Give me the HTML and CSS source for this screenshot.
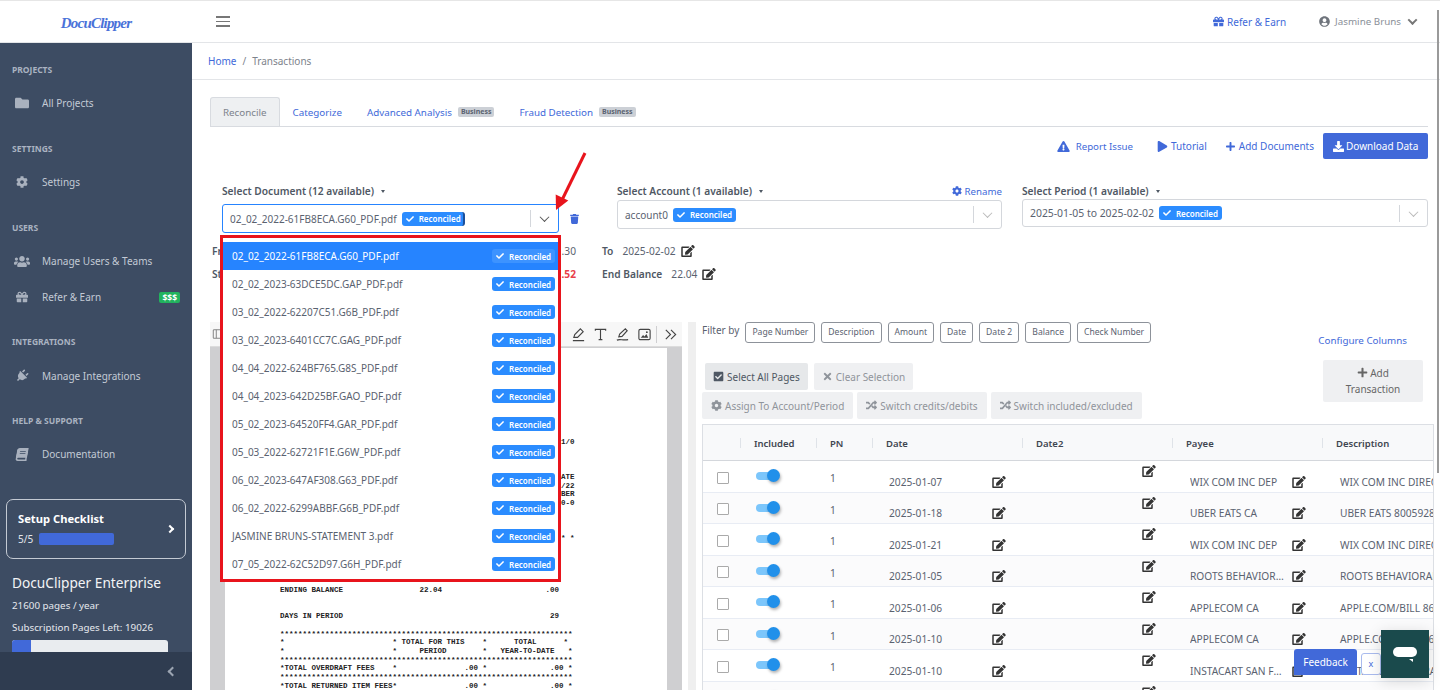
FILE: index.html
```html
<!DOCTYPE html>
<html lang="en">
<head>
    <meta charset="UTF-8">
    <meta name="viewport" content="width=device-width, initial-scale=1.0">
    <title>DocuClipper - Transactions</title>
    <link rel="stylesheet" href="styles.css">
</head>
<body>
    <svg class="sprite" xmlns="http://www.w3.org/2000/svg">
        <symbol id="i-folder" viewBox="0 0 512 512"><path d="M464 128H272l-64-64H48C21.49 64 0 85.49 0 112v288c0 26.51 21.49 48 48 48h416c26.51 0 48-21.49 48-48V176c0-26.51-21.49-48-48-48z"/></symbol>
        <symbol id="i-cog" viewBox="0 0 512 512"><path d="M487.4 315.7l-42.6-24.6c4.3-23.2 4.3-47 0-70.2l42.6-24.6c4.9-2.8 7.1-8.6 5.5-14-11.1-35.6-30-67.8-54.7-94.6-3.8-4.1-10-5.1-14.8-2.3L380.8 110c-17.9-15.4-38.5-27.3-60.8-35.1V25.8c0-5.6-3.9-10.5-9.4-11.7-36.7-8.2-74.3-7.8-109.2 0-5.5 1.2-9.4 6.1-9.4 11.7V75c-22.2 7.9-42.8 19.8-60.8 35.1L88.7 85.5c-4.9-2.8-11-1.9-14.8 2.3-24.7 26.7-43.6 58.9-54.7 94.6-1.7 5.4.6 11.2 5.5 14L67.3 221c-4.3 23.2-4.3 47 0 70.2l-42.6 24.6c-4.9 2.8-7.1 8.6-5.5 14 11.1 35.6 30 67.8 54.7 94.6 3.8 4.1 10 5.1 14.8 2.3l42.6-24.6c17.9 15.4 38.5 27.3 60.8 35.1v49.2c0 5.6 3.9 10.5 9.4 11.7 36.7 8.2 74.3 7.8 109.2 0 5.5-1.2 9.4-6.1 9.4-11.7v-49.2c22.2-7.9 42.8-19.8 60.8-35.1l42.6 24.6c4.9 2.8 11 1.9 14.8-2.3 24.7-26.7 43.6-58.9 54.7-94.6 1.5-5.5-.7-11.3-5.6-14.1zM256 336c-44.1 0-80-35.9-80-80s35.9-80 80-80 80 35.9 80 80-35.9 80-80 80z"/></symbol>
        <symbol id="i-users" viewBox="0 0 640 512"><path d="M96 224c35.3 0 64-28.7 64-64s-28.7-64-64-64-64 28.7-64 64 28.7 64 64 64zm448 0c35.3 0 64-28.7 64-64s-28.7-64-64-64-64 28.7-64 64 28.7 64 64 64zm32 32h-64c-17.6 0-33.5 7.1-45.1 18.6 40.3 22.1 68.9 62 75.1 109.4h66c17.7 0 32-14.3 32-32v-32c0-35.3-28.7-64-64-64zm-256 0c61.9 0 112-50.1 112-112S381.9 32 320 32 208 82.1 208 144s50.1 112 112 112zm76.800 32h-8.300c-20.800 10-43.900 16-68.500 16s-47.600-6-68.500-16h-8.300C179.600 288 128 339.600 128 403.200V432c0 26.500 21.500 48 48 48h288c26.500 0 48-21.500 48-48v-28.800c0-63.600-51.600-115.200-115.200-115.200zm-223.700-13.400C161.500 263.100 145.600 256 128 256H64c-35.300 0-64 28.700-64 64v32c0 17.700 14.300 32 32 32h65.900c6.300-47.400 34.900-87.300 75.200-109.400z"/></symbol>
        <symbol id="i-gift" viewBox="0 0 512 512"><path d="M32 448c0 18 14 32 32 32h160V320H32zM288 480h160c18 0 32-14 32-32V320H288zM480 160h-42c6-12 10-26 10-40 0-48-40-88-88-88-42 0-68 22-104 70-36-48-62-70-104-70-48 0-88 40-88 88 0 14 3 28 10 40H32c-18 0-32 14-32 32v80c0 9 7 16 16 16h480c9 0 16-7 16-16v-80c0-18-14-32-32-32zM152 160c-22 0-40-18-40-40s18-40 40-40c20 0 35 3 81 80zm208 0h-81c46-77 61-80 81-80 22 0 40 18 40 40s-18 40-40 40z"/></symbol>
        <symbol id="i-plug" viewBox="-128 -64 640 640"><path transform="rotate(45 192 256)" d="M320 32a32 32 0 0 0-64 0v96h64zm48 128H16a16 16 0 0 0-16 16v32a16 16 0 0 0 16 16h16v32a160.070 160.070 0 0 0 128 156.800V512h64v-99.200A160.070 160.070 0 0 0 352 256v-32h16a16 16 0 0 0 16-16v-32a16 16 0 0 0-16-16zM128 32a32 32 0 0 0-64 0v96h64z"/></symbol>
        <symbol id="i-book" viewBox="0 0 448 512"><path d="M448 360V24c0-13-11-24-24-24H96C43 0 0 43 0 96v320c0 53 43 96 96 96h328c13 0 24-11 24-24v-16c0-8-4-14-9-19-4-15-4-58 0-72 5-5 9-11 9-21zM128 134c0-3 3-6 6-6h212c3 0 6 3 6 6v20c0 3-3 6-6 6H134c-3 0-6-3-6-6zm0 64c0-3 3-6 6-6h212c3 0 6 3 6 6v20c0 3-3 6-6 6H134c-3 0-6-3-6-6zm253 250H96c-18 0-32-14-32-32s14-32 32-32h285c-2 17-2 47 0 64z"/></symbol>
        <symbol id="i-edit" viewBox="0 0 576 512"><path d="M402.6 83.2l90.2 90.2c3.8 3.8 3.8 10 0 13.8L274.4 405.6l-92.8 10.3c-12.4 1.4-22.9-9.1-21.5-21.5l10.3-92.8L388.8 83.2c3.8-3.8 10-3.8 13.8 0zm162-22.9l-48.8-48.8c-15.2-15.2-39.9-15.2-55.2 0l-35.4 35.4c-3.8 3.8-3.8 10 0 13.8l90.2 90.2c3.8 3.8 10 3.8 13.8 0l35.4-35.4c15.2-15.3 15.2-40 0-55.2zM384 346.2V448H64V128h229.8c3.2 0 6.2-1.3 8.5-3.5l40-40c7.6-7.6 2.2-20.5-8.5-20.5H48C21.5 64 0 85.5 0 112v352c0 26.5 21.5 48 48 48h352c26.5 0 48-21.5 48-48V306.2c0-10.7-12.9-16-20.5-8.5l-40 40c-2.2 2.3-3.5 5.3-3.5 8.5z"/></symbol>
        <symbol id="i-warn" viewBox="0 0 576 512"><path fill-rule="evenodd" d="M569.5 440L329.6 24c-18.4-32-64.7-32-83.2 0L6.5 440c-18.4 31.9 4.6 72 41.6 72h479.8c36.9 0 60-40 41.6-72zM288 354c-25.4 0-46 20.6-46 46s20.6 46 46 46 46-20.6 46-46-20.6-46-46-46zm-43.7-165.4l7.4 136c.3 6.4 5.6 11.4 12 11.4h48.5c6.4 0 11.6-5 12-11.4l7.4-136c.4-6.9-5.1-12.6-12-12.6h-63.4c-6.9 0-12.4 5.8-12 12.6z"/></symbol>
        <symbol id="i-play" viewBox="0 0 448 512"><path d="M424 213L72 5C43-12 0 5 0 47v417c0 38 41 61 72 42l352-208c31-19 31-66 0-85z"/></symbol>
        <symbol id="i-plus" viewBox="0 0 448 512"><path d="M416 208H272V64c0-18-14-32-32-32h-32c-18 0-32 14-32 32v144H32c-18 0-32 14-32 32v32c0 18 14 32 32 32h144v144c0 18 14 32 32 32h32c18 0 32-14 32-32V304h144c18 0 32-14 32-32v-32c0-18-14-32-32-32z"/></symbol>
        <symbol id="i-download" viewBox="0 0 512 512"><path d="M216 0h80c13 0 24 11 24 24v168h88c18 0 27 21 14 34L270 378c-8 8-20 8-28 0L90 226c-13-13-4-34 14-34h88V24c0-13 11-24 24-24zM512 376v112c0 13-11 24-24 24H24c-13 0-24-11-24-24V376c0-13 11-24 24-24h147l49 49c20 20 52 20 72 0l49-49h147c13 0 24 11 24 24z"/></symbol>
        <symbol id="i-check" viewBox="0 0 512 512"><path d="M174 439L7 273c-10-10-10-26 0-36l36-36c10-10 26-10 36 0l113 113L433 73c10-10 26-10 36 0l36 36c10 10 10 26 0 36L210 439c-10 10-26 10-36 0z"/></symbol>
        <symbol id="i-checksq" viewBox="0 0 448 512"><path d="M400 480H48c-26.5 0-48-21.5-48-48V80c0-26.5 21.5-48 48-48h352c26.5 0 48 21.5 48 48v352c0 26.5-21.5 48-48 48zM195.3 382l184-184c6-6 6-16 0-22l-22.6-22.6c-6-6-16-6-22 0L184 303.700l-70-70c-6-6-16-6-22 0l-22.600 22.600c-6 6-6 16 0 22l103.600 103.700c6 6 16 6 22.300 0z"/></symbol>
        <symbol id="i-times" viewBox="0 0 352 512"><path d="M242.7 256l100-100c12.300-12.300 12.300-32.200 0-44.500l-22.200-22.200c-12.300-12.300-32.200-12.300-44.500 0L176 189.300 76 89.300c-12.300-12.300-32.200-12.300-44.500 0L9.300 111.500c-12.300 12.300-12.300 32.200 0 44.500l100 100-100 100c-12.300 12.300-12.300 32.200 0 44.500l22.200 22.200c12.300 12.300 32.200 12.300 44.500 0l100-100 100 100c12.300 12.300 32.200 12.300 44.500 0l22.200-22.200c12.300-12.300 12.300-32.200 0-44.500z"/></symbol>
        <symbol id="i-random" viewBox="0 0 512 512"><path d="M504 362l-80 80c-15 15-41 4-41-17v-41h-59c-3 0-7-2-9-4l-71-76 53-57 57 61h29v-42c0-21 26-32 41-17l80 80c9 9 9 24 0 33zM9 160h84l58 62 53-57-71-76c-2-2-6-4-9-4H9c-5 0-9 4-9 9v57c0 5 4 9 9 9zm374 0v41c0 21 26 32 41 17l80-80c9-9 9-24 0-33l-80-80c-15-15-41-4-41 17v42h-59c-3 0-7 2-9 4L93 352H9c-5 0-9 4-9 9v57c0 5 4 9 9 9h120c3 0 7-2 9-4l211-263z"/></symbol>
        <symbol id="i-trash" viewBox="0 0 448 512"><path d="M432 32H312l-9-19c-4-8-12-13-21-13H166c-9 0-17 5-21 13l-9 19H16C7 32 0 39 0 48v32c0 9 7 16 16 16h416c9 0 16-7 16-16V48c0-9-7-16-16-16zM53 467c2 25 23 45 48 45h246c25 0 46-20 48-45l21-339H32z"/></symbol>
        <symbol id="i-user" viewBox="0 0 496 512"><path fill-rule="evenodd" d="M248 8C111 8 0 119 0 256s111 248 248 248 248-111 248-248S385 8 248 8zm0 96c49 0 88 39 88 88s-39 88-88 88-88-39-88-88 39-88 88-88zm0 344c-59 0-111-27-146-69 19-36 56-61 98-61 2 0 5 0 7 1 13 4 26 6 41 6s28-2 41-6c2-1 5-1 7-1 42 0 79 25 98 61-35 42-87 69-146 69z"/></symbol>
    </svg>

    <header class="topbar">
        <div class="logo">DocuClipper</div>
        <div class="burger"><span></span><span></span><span></span></div>
        <div class="top-right">
            <a class="top-link"><svg class="ic"><use href="#i-gift"/></svg>Refer &amp; Earn</a>
            <span class="top-user"><svg class="ic ic-user"><use href="#i-user"/></svg>Jasmine Bruns<i class="chev chev-user"></i></span>
        </div>
    </header>

    <div class="layout">
        <aside class="sidebar">
            <div class="side-section">
                <div class="side-label">Projects</div>
                <div class="side-item"><svg class="side-ic"><use href="#i-folder"/></svg>All Projects</div>
            </div>
            <div class="side-section">
                <div class="side-label">Settings</div>
                <div class="side-item"><svg class="side-ic side-ic-small"><use href="#i-cog"/></svg>Settings</div>
            </div>
            <div class="side-section">
                <div class="side-label">Users</div>
                <div class="side-item"><svg class="side-ic side-ic-wide"><use href="#i-users"/></svg>Manage Users &amp; Teams</div>
                <div class="side-item"><svg class="side-ic side-ic-small"><use href="#i-gift"/></svg>Refer &amp; Earn<span class="money">$$$</span></div>
            </div>
            <div class="side-section">
                <div class="side-label">Integrations</div>
                <div class="side-item"><svg class="side-ic side-ic-plug"><use href="#i-plug"/></svg>Manage Integrations</div>
            </div>
            <div class="side-section">
                <div class="side-label">Help &amp; Support</div>
                <div class="side-item"><svg class="side-ic side-ic-book"><use href="#i-book"/></svg>Documentation</div>
            </div>

            <div class="checklist">
                <div class="check-body">
                    <div class="check-title">Setup Checklist</div>
                    <div class="check-progress">5/5<span class="check-bar"></span></div>
                </div>
                <i class="chev-right"></i>
            </div>

            <div class="plan">
                <div class="plan-name">DocuClipper Enterprise</div>
                <div class="plan-line">21600 pages / year</div>
                <div class="plan-line">Subscription Pages Left: 19026</div>
                <div class="plan-bar"><div class="plan-fill"></div></div>
            </div>
            <div class="side-foot"><i class="chev-left"></i></div>
        </aside>

        <main class="main">
            <nav class="breadcrumb"><a>Home</a><span class="crumb-sep">/</span><span>Transactions</span></nav>

            <div class="content">
                <div class="tabs">
                    <div class="tab active">Reconcile</div>
                    <div class="tab">Categorize</div>
                    <div class="tab">Advanced Analysis<span class="biz">Business</span></div>
                    <div class="tab">Fraud Detection<span class="biz">Business</span></div>
                </div>

                <div class="actions">
                    <a class="action a-report"><svg class="ic"><use href="#i-warn"/></svg>Report Issue</a>
                    <a class="action a-tutorial"><svg class="ic"><use href="#i-play"/></svg>Tutorial</a>
                    <a class="action a-add"><svg class="ic"><use href="#i-plus"/></svg>Add Documents</a>
                    <button class="btn-primary"><svg class="ic"><use href="#i-download"/></svg>Download Data</button>
                </div>

                <div class="selectors">
                    <div class="sel-col sel-doc">
                        <div class="sel-label">Select Document (12 available)<i class="caret"></i></div>
                        <div class="select focus">
                            <span>02_02_2022-61FB8ECA.G60_PDF.pdf</span>
                            <span class="badge badge-cut"><svg class="ic-check"><use href="#i-check"/></svg>Reconciled</span>
                            <span class="sel-end"><i class="chev"></i></span>
                        </div>
                        <ul class="dropdown">
                            <li class="current"><span>02_02_2022-61FB8ECA.G60_PDF.pdf</span><span class="badge"><svg class="ic-check"><use href="#i-check"/></svg>Reconciled</span></li>
                            <li><span>02_02_2023-63DCE5DC.GAP_PDF.pdf</span><span class="badge"><svg class="ic-check"><use href="#i-check"/></svg>Reconciled</span></li>
                            <li><span>03_02_2022-62207C51.G6B_PDF.pdf</span><span class="badge"><svg class="ic-check"><use href="#i-check"/></svg>Reconciled</span></li>
                            <li><span>03_02_2023-6401CC7C.GAG_PDF.pdf</span><span class="badge"><svg class="ic-check"><use href="#i-check"/></svg>Reconciled</span></li>
                            <li><span>04_04_2022-624BF765.G8S_PDF.pdf</span><span class="badge"><svg class="ic-check"><use href="#i-check"/></svg>Reconciled</span></li>
                            <li><span>04_04_2023-642D25BF.GAO_PDF.pdf</span><span class="badge"><svg class="ic-check"><use href="#i-check"/></svg>Reconciled</span></li>
                            <li><span>05_02_2023-64520FF4.GAR_PDF.pdf</span><span class="badge"><svg class="ic-check"><use href="#i-check"/></svg>Reconciled</span></li>
                            <li><span>05_03_2022-62721F1E.G6W_PDF.pdf</span><span class="badge"><svg class="ic-check"><use href="#i-check"/></svg>Reconciled</span></li>
                            <li><span>06_02_2023-647AF308.G63_PDF.pdf</span><span class="badge"><svg class="ic-check"><use href="#i-check"/></svg>Reconciled</span></li>
                            <li><span>06_02_2022-6299ABBF.G6B_PDF.pdf</span><span class="badge"><svg class="ic-check"><use href="#i-check"/></svg>Reconciled</span></li>
                            <li><span>JASMINE BRUNS-STATEMENT 3.pdf</span><span class="badge"><svg class="ic-check"><use href="#i-check"/></svg>Reconciled</span></li>
                            <li><span>07_05_2022-62C52D97.G6H_PDF.pdf</span><span class="badge"><svg class="ic-check"><use href="#i-check"/></svg>Reconciled</span></li>
                        </ul>
                    </div>
                    <svg class="trash"><use href="#i-trash"/></svg>
                    <div class="sel-col sel-account">
                        <div class="sel-label">Select Account (1 available)<i class="caret"></i><a class="rename"><svg class="ic"><use href="#i-cog"/></svg>Rename</a></div>
                        <div class="select">
                            <span>account0</span>
                            <span class="badge"><svg class="ic-check"><use href="#i-check"/></svg>Reconciled</span>
                            <span class="sel-end"><i class="chev chev-light"></i></span>
                        </div>
                    </div>
                    <div class="sel-col sel-period">
                        <div class="sel-label">Select Period (1 available)<i class="caret"></i></div>
                        <div class="select">
                            <span>2025-01-05 to 2025-02-02</span>
                            <span class="badge"><svg class="ic-check"><use href="#i-check"/></svg>Reconciled</span>
                            <span class="sel-end"><i class="chev chev-light"></i></span>
                        </div>
                    </div>
                </div>

                <div class="summary">
                    <div class="sum-row">
                        <div class="sum-left"><b>From</b><span>.30</span></div>
                        <div class="sum-right"><b>To</b><span>2025-02-02</span><svg class="ic-edit"><use href="#i-edit"/></svg></div>
                    </div>
                    <div class="sum-row">
                        <div class="sum-left"><b>Start Balance</b><span class="neg">.52</span></div>
                        <div class="sum-right"><b>End Balance</b><span>22.04</span><svg class="ic-edit"><use href="#i-edit"/></svg></div>
                    </div>
                </div>

                <div class="workspace">
                    <section class="viewer">
                        <div class="pdf-tools">
                            <svg class="tool tool-first" viewBox="0 0 14 14"><rect x="1.5" y="2" width="11" height="10" rx="1"/><path d="M5 2v10"/></svg>
                            <svg class="tool" viewBox="0 0 16 16"><path d="M3 11l1-3 6-6 3 3-6 6zM2 14.5h12"/></svg>
                            <svg class="tool" viewBox="0 0 16 16"><path d="M2.5 4V2.5h11V4M8 2.5v11M6 13.5h4"/></svg>
                            <svg class="tool" viewBox="0 0 16 16"><path d="M4 10.5l1-3 6-5.5 2 2-5.5 6zM2 14c3-1.5 6 .5 12-.5"/></svg>
                            <svg class="tool" viewBox="0 0 16 16"><rect x="2" y="2.5" width="12" height="11" rx="1.5"/><path class="tool-fill" d="M4 11.5l2.5-3 1.5 1.5 2-2.5 2 4z"/><circle class="tool-fill" cx="10.5" cy="5.5" r="1"/></svg>
                            <span class="tool-sep"></span>
                            <svg class="tool" viewBox="0 0 16 16"><path d="M3 3l5 5-5 5M8.5 3l5 5-5 5"/></svg>
                        </div>
                        <div class="pdf-scroll">
                            <pre class="pdf-page pdf-far">










1/0



ATE
/22
BER
0-0



* *</pre>
                            <pre class="pdf-page">





ENDING BALANCE                 22.04                       .00


DAYS IN PERIOD                                              29

*****************************************************************
*                        * TOTAL FOR THIS    *      TOTAL      *
*                        *     PERIOD        *   YEAR-TO-DATE   *
*****************************************************************
*TOTAL OVERDRAFT FEES    *               .00 *              .00 *
*****************************************************************
*TOTAL RETURNED ITEM FEES*               .00 *              .00 *</pre>
                        </div>
                    </section>

                    <div class="gutter"><span></span></div>

                    <section class="panel">
                        <div class="filters">
                            <span class="filter-by">Filter by</span>
                            <span class="chip">Page Number</span>
                            <span class="chip">Description</span>
                            <span class="chip">Amount</span>
                            <span class="chip">Date</span>
                            <span class="chip">Date 2</span>
                            <span class="chip">Balance</span>
                            <span class="chip">Check Number</span>
                        </div>

                        <div class="tools-row">
                            <div class="tool-btns">
                                <div class="btn-line first">
                                    <span class="gbtn dark"><svg class="ic"><use href="#i-checksq"/></svg>Select All Pages</span>
                                    <span class="gbtn"><svg class="ic"><use href="#i-times"/></svg>Clear Selection</span>
                                </div>
                                <div class="btn-line">
                                    <span class="gbtn"><svg class="ic"><use href="#i-cog"/></svg>Assign To Account/Period</span>
                                    <span class="gbtn"><svg class="ic"><use href="#i-random"/></svg>Switch credits/debits</span>
                                    <span class="gbtn"><svg class="ic"><use href="#i-random"/></svg>Switch included/excluded</span>
                                </div>
                            </div>
                            <div class="tool-side">
                                <a class="config">Configure Columns</a>
                                <span class="add-tx"><span><svg class="ic"><use href="#i-plus"/></svg>Add</span><span>Transaction</span></span>
                            </div>
                        </div>

                        <div class="table">
                            <div class="thead">
                                <span></span><span>Included</span><span>PN</span><span>Date</span><span>Date2</span><span>Payee</span><span>Description</span>
                            </div>
                            <div class="trow">
                                <span class="c-check"><i class="box"></i></span><span class="c-toggle"><i class="toggle"></i></span><span class="c-pn">1</span>
                                <span class="c-text c-date"><span class="txt">2025-01-07</span><svg class="ic-edit"><use href="#i-edit"/></svg></span>
                                <span class="c-date2"><svg class="ic-edit"><use href="#i-edit"/></svg></span>
                                <span class="c-text c-payee"><span class="txt">WIX COM INC DEP</span><svg class="ic-edit"><use href="#i-edit"/></svg></span>
                                <span class="c-text c-desc">WIX COM INC DIRECT DEP 000</span>
                            </div>
                            <div class="trow">
                                <span class="c-check"><i class="box"></i></span><span class="c-toggle"><i class="toggle"></i></span><span class="c-pn">1</span>
                                <span class="c-text c-date"><span class="txt">2025-01-18</span><svg class="ic-edit"><use href="#i-edit"/></svg></span>
                                <span class="c-date2"><svg class="ic-edit"><use href="#i-edit"/></svg></span>
                                <span class="c-text c-payee"><span class="txt">UBER EATS CA</span><svg class="ic-edit"><use href="#i-edit"/></svg></span>
                                <span class="c-text c-desc">UBER EATS 8005928996 CA</span>
                            </div>
                            <div class="trow">
                                <span class="c-check"><i class="box"></i></span><span class="c-toggle"><i class="toggle"></i></span><span class="c-pn">1</span>
                                <span class="c-text c-date"><span class="txt">2025-01-21</span><svg class="ic-edit"><use href="#i-edit"/></svg></span>
                                <span class="c-date2"><svg class="ic-edit"><use href="#i-edit"/></svg></span>
                                <span class="c-text c-payee"><span class="txt">WIX COM INC DEP</span><svg class="ic-edit"><use href="#i-edit"/></svg></span>
                                <span class="c-text c-desc">WIX COM INC DIRECT DEP 000</span>
                            </div>
                            <div class="trow">
                                <span class="c-check"><i class="box"></i></span><span class="c-toggle"><i class="toggle"></i></span><span class="c-pn">1</span>
                                <span class="c-text c-date"><span class="txt">2025-01-05</span><svg class="ic-edit"><use href="#i-edit"/></svg></span>
                                <span class="c-date2"><svg class="ic-edit"><use href="#i-edit"/></svg></span>
                                <span class="c-text c-payee"><span class="txt">ROOTS BEHAVIORAL HEALTH</span><svg class="ic-edit"><use href="#i-edit"/></svg></span>
                                <span class="c-text c-desc">ROOTS BEHAVIORAL HEALTH</span>
                            </div>
                            <div class="trow">
                                <span class="c-check"><i class="box"></i></span><span class="c-toggle"><i class="toggle"></i></span><span class="c-pn">1</span>
                                <span class="c-text c-date"><span class="txt">2025-01-06</span><svg class="ic-edit"><use href="#i-edit"/></svg></span>
                                <span class="c-date2"><svg class="ic-edit"><use href="#i-edit"/></svg></span>
                                <span class="c-text c-payee"><span class="txt">APPLECOM CA</span><svg class="ic-edit"><use href="#i-edit"/></svg></span>
                                <span class="c-text c-desc">APPLE.COM/BILL 8662712 CA</span>
                            </div>
                            <div class="trow">
                                <span class="c-check"><i class="box"></i></span><span class="c-toggle"><i class="toggle"></i></span><span class="c-pn">1</span>
                                <span class="c-text c-date"><span class="txt">2025-01-10</span><svg class="ic-edit"><use href="#i-edit"/></svg></span>
                                <span class="c-date2"><svg class="ic-edit"><use href="#i-edit"/></svg></span>
                                <span class="c-text c-payee"><span class="txt">APPLECOM CA</span><svg class="ic-edit"><use href="#i-edit"/></svg></span>
                                <span class="c-text c-desc">APPLE.COM/BILL 8662712 CA</span>
                            </div>
                            <div class="trow">
                                <span class="c-check"><i class="box"></i></span><span class="c-toggle"><i class="toggle"></i></span><span class="c-pn">1</span>
                                <span class="c-text c-date"><span class="txt">2025-01-10</span><svg class="ic-edit"><use href="#i-edit"/></svg></span>
                                <span class="c-date2"><svg class="ic-edit"><use href="#i-edit"/></svg></span>
                                <span class="c-text c-payee"><span class="txt">INSTACART SAN FRANCISCO</span><svg class="ic-edit"><use href="#i-edit"/></svg></span>
                                <span class="c-text c-desc">INSTACART SAN FRAN CA</span>
                            </div>
                            <div class="trow">
                                <span class="c-check"><i class="box"></i></span><span class="c-toggle"><i class="toggle"></i></span><span class="c-pn"></span>
                                <span class="c-text c-date"></span>
                                <span class="c-date2"><svg class="ic-edit"><use href="#i-edit"/></svg></span>
                                <span class="c-text c-payee"></span>
                                <span class="c-text c-desc"></span>
                            </div>
                        </div>
                    </section>
                </div>
            </div>
        </main>
    </div>

    <!-- annotation and floating widgets -->
    <svg class="red-arrow" viewBox="0 0 40 64"><path d="M35 3L12 50" stroke="#e8141c" stroke-width="3" fill="none"/><path d="M6 60L5.7 44.4 18.3 50.4z" fill="#e8141c"/></svg>
    <button class="feedback">Feedback</button>
    <span class="feedback-x">x</span>
    <div class="chat"><span class="bubble"></span></div>
    <span class="page-thumb"></span>
</body>
</html>
```

FILE: styles.css
```css
* {
    box-sizing: border-box;
}

html, body {
    height: 100%;
}

body {
    margin: 0;
    overflow: hidden;
    font-family: "Noto Sans", "Open Sans", sans-serif;
    font-size: 10px;
    color: #5a6270;
    background-color: #fff;
}

a {
    color: #4169d9;
}

.sprite {
    display: none;
}

.ic {
    width: 11px;
    height: 11px;
    fill: currentColor;
    flex: none;
}

.ic-edit {
    width: 14px;
    height: 12px;
    fill: #333;
    flex: none;
}

/* top bar */
.topbar {
    display: flex;
    align-items: center;
    height: 43px;
    border-top: 1px solid #e6e6e6;
    border-bottom: 1px solid #e3e5e8;
}

.logo {
    width: 192px;
    padding-top: 4px;
    text-align: center;
    font-family: "Liberation Serif", serif;
    font-size: 15px;
    font-weight: bold;
    font-style: italic;
    letter-spacing: -0.8px;
    color: #4a72d9;
}

.burger {
    display: flex;
    flex-direction: column;
    gap: 3px;
    width: 14px;
    margin-left: 24px;
}

.burger span {
    height: 1.5px;
    background-color: #777;
}

.top-right {
    display: flex;
    align-items: center;
    margin-left: auto;
    padding-right: 24px;
}

.top-link {
    display: flex;
    align-items: center;
    gap: 3px;
}

.top-user {
    display: flex;
    align-items: center;
    margin-left: 33px;
    font-size: 9.8px;
    color: #8a8f98;
}

.ic-user {
    margin-right: 5px;
    color: #6f747c;
}

.chev {
    display: block;
    width: 7px;
    height: 7px;
    border-right: 1.5px solid #555;
    border-bottom: 1.5px solid #555;
    transform: rotate(45deg) translate(-1px, -1px);
}

.chev-light {
    border-color: #bbb;
}

.chev-user {
    margin-left: 8px;
    border-width: 2px;
    border-color: #777;
}

.layout {
    display: flex;
    height: 647px;
}

/* sidebar */
.sidebar {
    display: flex;
    flex-direction: column;
    flex: none;
    width: 192px;
    padding-top: 20px;
    color: #c3cad5;
    background-color: #3d4c63;
}

.side-section {
    margin-bottom: 21px;
}

.side-section:nth-child(3), .side-section:nth-child(4) {
    margin-bottom: 20px;
}

.side-label {
    height: 14px;
    margin-bottom: 8px;
    padding-left: 12px;
    font-size: 8.5px;
    line-height: 14px;
    font-weight: bold;
    text-transform: uppercase;
    color: #aab3c1;
}

.side-section:nth-child(4) .side-label {
    margin-bottom: 9px;
}

.side-item {
    display: flex;
    align-items: center;
    height: 36px;
    padding: 0 12px 0 15px;
}

.side-ic {
    width: 14px;
    height: 14px;
    margin-right: 13px;
    fill: #a9b1be;
    flex: none;
}

.side-ic-small {
    width: 12px;
    height: 12px;
    margin: 0 14px 0 1px;
}

.side-ic-wide {
    width: 16px;
    height: 15px;
    margin: 0 12px 0 -1px;
}

.side-ic-plug {
    width: 16px;
    height: 16px;
    margin: 0 12px 0 -1px;
}

.side-ic-book {
    width: 12px;
    height: 13px;
    margin: 0 14px 0 1px;
    transform: skewX(-10deg);
}

.money {
    margin-left: auto;
    padding: 0 3px;
    font-size: 8.5px;
    line-height: 11px;
    font-weight: bold;
    color: #fff;
    background-color: #22b35e;
    border-radius: 2px;
}

.checklist {
    display: flex;
    align-items: center;
    justify-content: space-between;
    height: 60px;
    margin: 6px 6px 0;
    padding: 0 12px 0 11px;
    border: 1px solid #c4cad3;
    border-radius: 7px;
}

.check-body {
    margin-top: -2px;
}

.check-title {
    font-size: 11.2px;
    font-weight: bold;
    color: #fff;
}

.check-progress {
    display: flex;
    align-items: center;
    gap: 6px;
    margin-top: 6px;
    color: #e3e7ec;
}

.check-bar {
    width: 75px;
    height: 12px;
    background-color: #4169d9;
    border-radius: 2px;
}

.chev-right, .chev-left {
    display: block;
    width: 6px;
    height: 6px;
    border-top: 2px solid #fff;
    border-right: 2px solid #fff;
    transform: rotate(45deg);
}

.plan {
    padding: 13px 24px 0 12px;
    color: #e6e9ee;
}

.plan-name {
    font-size: 13.7px;
    line-height: 22px;
    white-space: nowrap;
    color: #f3f4f6;
}

.plan-line {
    margin-top: 5px;
    font-size: 9.8px;
    line-height: 17px;
}

.plan-name + .plan-line {
    margin-top: 3px;
}

.plan-bar {
    height: 12px;
    margin-top: 4px;
    background-color: #e9ecef;
    border-radius: 3px 3px 0 0;
    overflow: hidden;
}

.plan-fill {
    width: 19px;
    height: 100%;
    background-color: #4169d9;
}

.side-foot {
    display: flex;
    align-items: center;
    justify-content: flex-end;
    flex: 1;
    padding-right: 16px;
    background-color: #2f3c50;
}

.chev-left {
    width: 7px;
    height: 7px;
    border-color: #9ba4b1;
    transform: rotate(-135deg);
}

/* main column */
.main {
    flex: 1;
    min-width: 0;
}

.breadcrumb {
    display: flex;
    align-items: center;
    height: 37px;
    padding: 0 0 1px 16px;
    color: #7d838c;
    border-bottom: 1px solid #e3e5e8;
}

.crumb-sep {
    margin: 0 6px;
}

.content {
    padding: 17px 12px 0 18px;
}

.tabs {
    display: flex;
    height: 30px;
    border-bottom: 1px solid #d8dbe0;
}

.tab {
    display: flex;
    align-items: center;
    margin-right: 25px;
    padding-top: 1px;
    font-size: 9.8px;
    color: #4169d9;
}

.tab:nth-child(2) {
    margin-left: -12px;
}

.tab.active {
    padding: 1px 12px 0;
    color: #7d838c;
    background-color: #eef0f2;
    border: 1px solid #d8dbe0;
    border-bottom: none;
    border-radius: 3px 3px 0 0;
}

.biz {
    margin-left: 6px;
    padding: 0 3px;
    font-size: 7px;
    line-height: 10px;
    font-weight: bold;
    color: #5a6270;
    background-color: #ccd0d6;
    border-radius: 2px;
}

.actions {
    display: flex;
    align-items: center;
    justify-content: flex-end;
    height: 26px;
    margin-top: 6px;
}

.action {
    display: flex;
    align-items: center;
    gap: 5px;
}

.a-report {
    margin-right: 24px;
    font-size: 9.7px;
}

.a-report .ic {
    width: 13px;
    margin-right: 1px;
}

.a-tutorial {
    gap: 3px;
    margin-right: 19px;
}

.a-add {
    gap: 4px;
    margin-right: 9px;
}

.a-add .ic {
    width: 9px;
}

.btn-primary {
    display: flex;
    align-items: center;
    gap: 2px;
    height: 26px;
    width: 105px;
    padding: 0 0 0 10px;
    font-family: inherit;
    font-size: 10px;
    color: #fff;
    background-color: #4169d9;
    border: none;
    border-radius: 2px;
}

/* selectors */
.selectors {
    display: flex;
    height: 75px;
    margin-top: 25px;
    padding-left: 12px;
}

.sel-col {
    position: relative;
    flex: none;
}

.sel-doc {
    width: 337px;
}

.sel-account {
    width: 385px;
    margin-left: 23px;
}

.sel-period {
    width: 406px;
    margin-left: 20px;
}

.trash {
    width: 9px;
    height: 10px;
    margin: 30px 15px 0 11px;
    fill: #4169d9;
    flex: none;
}

.sel-label {
    display: flex;
    align-items: center;
    height: 14px;
    font-size: 10.2px;
    font-weight: 600;
    color: #4f5864;
}

.caret {
    width: 0;
    height: 0;
    margin-left: 7px;
    border-left: 2.5px solid transparent;
    border-right: 2.5px solid transparent;
    border-top: 3.5px solid #4f5864;
}

.rename {
    display: flex;
    align-items: center;
    gap: 3px;
    margin-left: auto;
    font-size: 9.7px;
    font-weight: 400;
}

.rename .ic {
    width: 10px;
    height: 10px;
}

.select {
    display: flex;
    align-items: center;
    height: 29px;
    margin-top: 2px;
    padding-left: 7px;
    border: 1px solid #d4d7dc;
    border-radius: 3px;
}

.sel-period .select {
    height: 28px;
    margin-top: 1px;
    font-size: 10.4px;
}

.sel-doc .select {
    margin-top: 6px;
}

.select.focus {
    border: 1.5px solid #2684ff;
}

.select .badge {
    margin-left: 5px;
}

.sel-end {
    display: flex;
    align-items: center;
    justify-content: center;
    width: 28px;
    height: 17px;
    margin-left: auto;
    border-left: 1px solid #d4d7dc;
}

.badge {
    display: inline-flex;
    align-items: center;
    width: 63px;
    height: 14px;
    padding-left: 4px;
    font-size: 8px;
    font-weight: 600;
    color: #fff;
    background-color: #2b8cff;
    border-radius: 3px;
    flex: none;
}

.badge-cut {
    border-right: 2px solid #1d4f9a;
}

.ic-check {
    width: 8px;
    height: 8px;
    margin-right: 5px;
    fill: #fff;
    flex: none;
}

.dropdown {
    position: absolute;
    z-index: 5;
    top: 51px;
    left: -2px;
    width: 341px;
    height: 347px;
    margin: 0;
    padding: 4px 0 0;
    list-style: none;
    background-color: #fff;
    border: 3px solid #e8141c;
}

.dropdown li {
    display: flex;
    align-items: center;
    justify-content: space-between;
    height: 28px;
    padding: 0 3px 0 9px;
}

.dropdown li.current {
    color: #fff;
    background-color: #2684ff;
}

.dropdown li.current .badge {
    background-color: #3d93ff;
}

/* summary */
.summary {
    height: 83px;
    padding-left: 2px;
    margin-top: -20px;
}

.sum-row {
    display: flex;
    align-items: center;
    height: 23px;
    font-size: 10.2px;
}

.sum-row b {
    font-weight: 600;
    color: #4f5864;
}

.sum-left {
    display: flex;
    justify-content: space-between;
    width: 364px;
}

.sum-right {
    display: flex;
    align-items: center;
    gap: 9px;
    margin-left: 26px;
}

.sum-right .ic-edit {
    margin-left: -4px;
}

.neg {
    font-weight: bold;
    color: #e8414a;
}

/* pdf viewer and panel */
.workspace {
    display: flex;
    height: 368px;
    margin: 0 -12px 0 0;
}

.viewer {
    display: flex;
    flex-direction: column;
    flex: none;
    width: 472px;
    background-color: #cfcfd1;
}

.pdf-tools {
    display: flex;
    align-items: center;
    justify-content: flex-end;
    height: 25px;
    padding-right: 4px;
    background-color: #f7f7f7;
    border-bottom: 1px solid #dcdcdc;
}

.tool {
    width: 15px;
    height: 15px;
    margin-left: 7px;
    fill: none;
    stroke: #444;
    stroke-width: 1.2;
}

.tool-first {
    width: 12px;
    height: 12px;
    margin-right: auto;
    margin-left: 2px;
    stroke: #888;
}

.tool-fill {
    fill: #444;
    stroke: none;
}

.tool-sep {
    width: 1px;
    height: 17px;
    margin-left: 4px;
    margin-right: -1px;
    background-color: #cfcfd1;
}

.pdf-scroll {
    flex: 1;
    margin: 1px 15px 0;
    padding-top: 3px;
    background-color: #fff;
    overflow: hidden;
}

.pdf-page {
    margin: 0;
    padding: 0 0 0 55px;
    font-family: "Liberation Mono", monospace;
    font-size: 7.5px;
    line-height: 8.7px;
    font-weight: bold;
    color: #222;
}

.pdf-far {
    padding-left: 336px;
}

.gutter {
    position: relative;
    flex: none;
    width: 8px;
    margin-left: 6px;
    background-color: #efefef;
}

.gutter span {
    position: absolute;
    top: 298px;
    left: 1px;
    width: 5px;
    height: 22px;
    background-image: radial-gradient(#bbb 0.6px, transparent 0.7px);
    background-size: 2px 2px;
}

.panel {
    flex: 1;
    min-width: 0;
    padding: 0 6px;
}

.filters {
    display: flex;
    align-items: flex-start;
    gap: 6px;
    height: 20px;
}

.filter-by {
    font-size: 10px;
    line-height: 16px;
}

.chip {
    height: 21px;
    padding: 0 6px;
    font-size: 8.6px;
    line-height: 19px;
    border: 1px solid #8d929a;
    border-radius: 3px;
}

.tools-row {
    display: flex;
    justify-content: space-between;
    height: 82px;
}

.tool-btns {
    padding-top: 21px;
}

.btn-line {
    display: flex;
    gap: 4px;
    height: 27px;
    margin-top: 2px;
}

.btn-line.first {
    gap: 6px;
    margin: 0 0 0 3px;
}

.gbtn {
    display: flex;
    align-items: center;
    gap: 3px;
    height: 27px;
    padding: 0 9px;
    color: #8f949b;
    background-color: #eff0f2;
    border-radius: 2px;
}

.btn-line.first .gbtn {
    padding: 0 8px;
}

.gbtn.dark {
    color: #4f5864;
    background-color: #e6e8ea;
}

.tool-side {
    display: flex;
    flex-direction: column;
    align-items: flex-end;
    padding-right: 11px;
}

.config {
    height: 18px;
    margin: -9px 16px 0 0;
    font-size: 9.8px;
    line-height: 16px;
}

.add-tx {
    display: flex;
    flex-direction: column;
    align-items: center;
    justify-content: center;
    width: 100px;
    height: 42px;
    margin-top: 9px;
    line-height: 16px;
    color: #666;
    background-color: #eff0f2;
    border-radius: 2px;
}

.add-tx .ic {
    margin-right: 2px;
    vertical-align: -1px;
}

/* transactions table */
.table {
    position: relative;
    width: 732px;
    height: 266px;
    overflow: hidden;
    border: 1px solid #dcdfe4;
    border-bottom: none;
}

.thead, .trow {
    display: grid;
    grid-template-columns: 37px 76px 56px 150px 150px 150px 1fr;
}

.thead {
    height: 36px;
    font-size: 9.5px;
    font-weight: 600;
    color: #3f4650;
    background-color: #f8f9fa;
    border-bottom: 1px solid #d4d7dc;
}

.thead span {
    display: flex;
    align-items: center;
    height: 10px;
    margin-top: 13px;
    padding-left: 13px;
    border-left: 1px solid #dfe3e8;
}

.thead span:first-child {
    border-left: none;
}

.trow {
    height: 31.5px;
    font-size: 10.2px;
    border-bottom: 1px solid #e8ecf4;
}

.trow:nth-child(odd) {
    background-color: #fbfbfc;
}

.trow > span {
    display: flex;
    align-items: center;
    min-width: 0;
}

.c-check {
    padding: 3px 0 0 14px;
}

.box {
    display: block;
    width: 12px;
    height: 12px;
    background-color: #fff;
    border: 1.5px solid #aaa;
    border-radius: 1px;
}

.toggle {
    position: relative;
    display: block;
    width: 22px;
    height: 8px;
    margin-left: 16px;
    background-color: #7cc6fb;
    border-radius: 4px;
}

.toggle::after {
    content: "";
    position: absolute;
    top: -3px;
    right: -2px;
    width: 13px;
    height: 13px;
    background-color: #2190ea;
    border-radius: 50%;
    box-shadow: 1px 2px 3px rgba(0, 0, 0, 0.3);
}

.c-pn {
    padding: 4px 0 0 14px;
}

.c-text {
    padding-top: 11px;
    white-space: nowrap;
    overflow: hidden;
}

.c-date {
    padding-left: 17px;
}

.c-date .txt {
    width: 103px;
}

.c-date2 {
    padding: 0 0 10px 120px;
}

.c-payee {
    padding-left: 18px;
}

.c-payee .txt {
    width: 97px;
    margin-right: 5px;
    overflow: hidden;
    text-overflow: ellipsis;
}

.c-desc {
    padding-left: 18px;
}

/* floating stuff over the page */
.red-arrow {
    position: absolute;
    top: 150px;
    left: 550px;
    width: 40px;
    height: 64px;
}

.feedback {
    position: absolute;
    top: 649px;
    left: 1294px;
    width: 63px;
    height: 26px;
    padding: 0;
    font-family: inherit;
    font-size: 10px;
    color: #fff;
    background-color: #4169d9;
    border: none;
    border-radius: 3px 3px 0 0;
}

.feedback-x {
    position: absolute;
    top: 653px;
    left: 1361px;
    width: 20px;
    height: 22px;
    font-size: 9px;
    line-height: 20px;
    text-align: center;
    color: #4169d9;
    background-color: #fff;
    border: 1px solid #a9bbee;
    border-radius: 3px;
}

.chat {
    position: absolute;
    top: 630px;
    left: 1381px;
    width: 48px;
    height: 48px;
    background-color: #1a4a4c;
    box-shadow: 0 3px 14px rgba(0, 0, 0, 0.15);
}

.bubble {
    position: absolute;
    top: 17px;
    left: 12px;
    width: 24px;
    height: 10px;
    background-color: #fff;
    border-radius: 5px;
}

.bubble::after {
    content: "";
    position: absolute;
    top: 12px;
    right: 4px;
    border-left: 4px solid transparent;
    border-top: 3px solid #fff;
}

.page-thumb {
    position: absolute;
    top: 10px;
    right: 1px;
    width: 2px;
    height: 463px;
    background-color: #9a9a9a;
}
```
